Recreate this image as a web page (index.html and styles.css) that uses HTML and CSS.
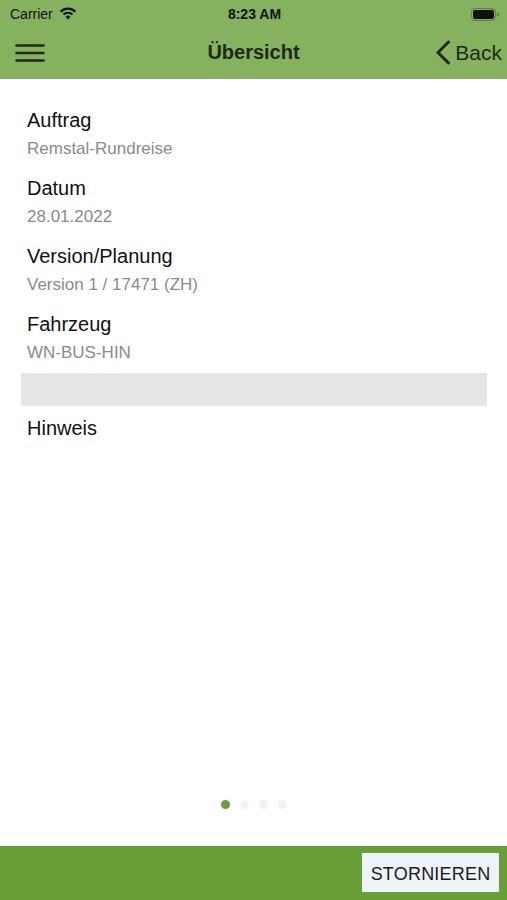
FILE: index.html
```html
<!DOCTYPE html>
<html lang="de">
<head>
<meta charset="utf-8">
<title>Übersicht</title>
<link rel="stylesheet" href="styles.css">
</head>
<body>
<div class="app">
  <header class="top">
    <div class="status">
      <div class="status-left">
        <span class="carrier">Carrier</span>
        <svg class="wifi" width="18" height="13" viewBox="0 0 18 13">
          <path d="M9 12.5 L6.6 9.8 A3.4 3.4 0 0 1 11.4 9.8 Z" fill="#111"/>
          <path d="M4.5 7.6 A6.4 6.4 0 0 1 13.5 7.6" stroke="#111" stroke-width="2.1" fill="none"/>
          <path d="M1.6 4.7 A10.4 10.4 0 0 1 16.4 4.7" stroke="#111" stroke-width="2.1" fill="none"/>
        </svg>
      </div>
      <span class="time">8:23 AM</span>
      <div class="status-right">
        <svg class="battery" width="28" height="13" viewBox="0 0 28 13">
          <rect x="0.5" y="0.5" width="24" height="12" rx="3.5" fill="none" stroke="#5d7f44" stroke-width="1"/>
          <rect x="2" y="2" width="21" height="9" rx="2" fill="#111"/>
          <path d="M26 4.5 A2 2 0 0 1 26 8.5 Z" fill="#5d7f44"/>
        </svg>
      </div>
    </div>
    <nav class="navbar">
      <button class="menu" aria-label="Menü">
        <svg width="30" height="18" viewBox="0 0 30 18">
          <path d="M1.5 1.5 H28.5 M1.5 9 H28.5 M1.5 16.5 H28.5" stroke="#1d2a17" stroke-width="2.6" stroke-linecap="round"/>
        </svg>
      </button>
      <h1 class="title">Übersicht</h1>
      <button class="back">
        <svg width="16" height="25" viewBox="0 0 16 25">
          <path d="M13.5 2 L3 12.5 L13.5 23" stroke="#1d2a17" stroke-width="3" fill="none" stroke-linecap="round" stroke-linejoin="round"/>
        </svg>
        <span>Back</span>
      </button>
    </nav>
  </header>

  <main class="content">
    <div class="item">
      <div class="label">Auftrag</div>
      <div class="value">Remstal-Rundreise</div>
    </div>
    <div class="item">
      <div class="label">Datum</div>
      <div class="value">28.01.2022</div>
    </div>
    <div class="item">
      <div class="label">Version/Planung</div>
      <div class="value">Version 1 / 17471 (ZH)</div>
    </div>
    <div class="item">
      <div class="label">Fahrzeug</div>
      <div class="value">WN-BUS-HIN</div>
    </div>
    <div class="divider"></div>
    <div class="item">
      <div class="label">Hinweis</div>
    </div>
  </main>

  <div class="dots">
    <span class="dot active"></span>
    <span class="dot"></span>
    <span class="dot"></span>
    <span class="dot"></span>
  </div>

  <footer class="bottom">
    <button class="cancel">STORNIEREN</button>
  </footer>
</div>
</body>
</html>
```

FILE: styles.css
```css
* { box-sizing: border-box; }
html, body { margin: 0; padding: 0; }
body {
  font-family: "Liberation Sans", Arial, sans-serif;
  background: #ffffff;
  color: #111;
}
.app {
  width: 507px;
  height: 900px;
  display: flex;
  flex-direction: column;
  overflow: hidden;
}
.top {
  background: #86b260;
  height: 79px;
  display: flex;
  flex-direction: column;
}
.status {
  height: 28px;
  display: flex;
  align-items: center;
  justify-content: space-between;
  padding: 0 8px 0 10px;
}
.status-left {
  display: flex;
  align-items: center;
  gap: 6px;
  width: 120px;
}
.carrier {
  font-size: 14px;
  color: #111;
}
.wifi { margin-top: -1px; }
.time {
  font-size: 14px;
  font-weight: bold;
  color: #111;
}
.status-right {
  width: 120px;
  display: flex;
  justify-content: flex-end;
}
.navbar {
  flex: 1;
  display: flex;
  align-items: center;
  justify-content: space-between;
  padding: 0 5px 2px 15px;
}
.menu, .back {
  background: none;
  border: 0;
  padding: 0;
  font: inherit;
  display: flex;
  align-items: center;
  cursor: pointer;
}
.menu { width: 110px; }
.back {
  width: 120px;
  justify-content: flex-end;
  gap: 4px;
  color: #1d2a17;
  font-size: 21px;
}
.title {
  margin: 0;
  font-size: 20px;
  font-weight: bold;
  color: #1d2a17;
}
.content {
  flex: 1;
  padding: 29px 20px 0 21px;
}
.item {
  padding-left: 6px;
  margin-bottom: 17px;
}
.label {
  font-size: 20px;
  line-height: 24px;
  color: #111;
}
.value {
  margin-top: 7px;
  font-size: 17px;
  line-height: 20px;
  color: #8a8a8a;
}
.item:nth-child(4) { margin-bottom: 10px; }
.divider {
  height: 33px;
  background: #e6e6e6;
  margin-bottom: 10px;
}
.dots {
  display: flex;
  justify-content: center;
  gap: 10px;
  margin: 0 0 37px 0;
}
.dot {
  width: 9px;
  height: 9px;
  border-radius: 50%;
  background: #f2f2f2;
}
.dot.active { background: #689f38; }
.bottom {
  height: 54px;
  background: #689f38;
  display: flex;
  justify-content: flex-end;
  align-items: flex-start;
  padding: 7px 8px 0 0;
}
.cancel {
  width: 137px;
  height: 39px;
  padding: 3px 0 0;
  background: #eef3f9;
  border: 0;
  font-family: "Liberation Sans", Arial, sans-serif;
  font-size: 18px;
  color: #1a1a1a;
  letter-spacing: 0.2px;
}
```
